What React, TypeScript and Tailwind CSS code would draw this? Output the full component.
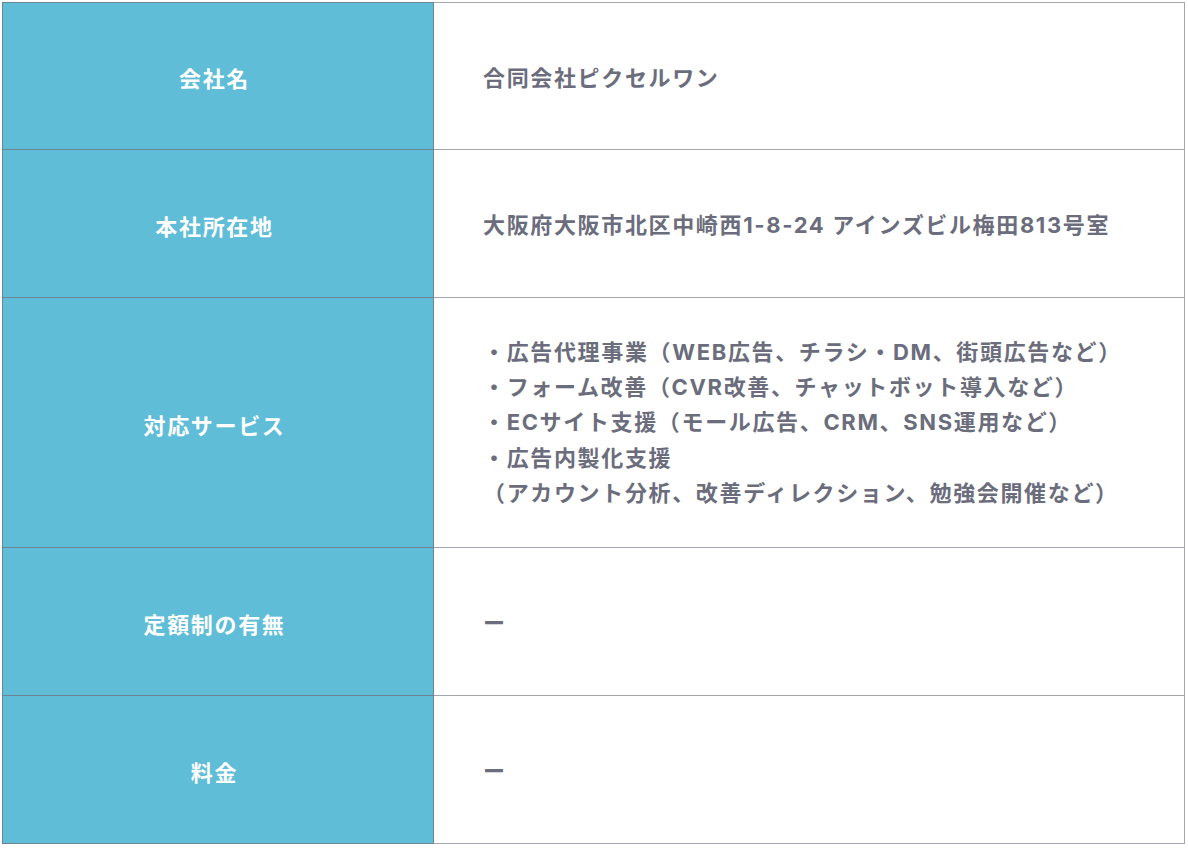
const rows: { label: string; value: React.ReactNode; h: string; pad: string }[] = [
  { label: "会社名", value: "合同会社ピクセルワン", h: "h-[147px]", pad: "pt-[5px]" },
  { label: "本社所在地", value: "大阪府大阪市北区中崎西1-8-24 アインズビル梅田813号室", h: "h-[148px]", pad: "pt-[5px]" },
  {
    label: "対応サービス",
    value: (
      <>
        ・広告代理事業（WEB広告、チラシ・DM、街頭広告など）
        <br />
        ・フォーム改善（CVR改善、チャットボット導入など）
        <br />
        ・ECサイト支援（モール広告、CRM、SNS運用など）
        <br />
        ・広告内製化支援
        <br />
        （アカウント分析、改善ディレクション、勉強会開催など）
      </>
    ),
    h: "h-[250px]",
    pad: "pt-[1px]",
  },
  { label: "定額制の有無", value: "ー", h: "h-[148px]", pad: "pt-[5px]" },
  { label: "料金", value: "ー", h: "h-[148px]", pad: "pt-[5px]" },
];

export default function App() {
  return (
    <div className="bg-white p-[2px] pr-[3px] font-['Inter','Noto_Sans_CJK_JP',sans-serif]">
      <table className="w-full border-collapse border border-[#7b7e8b]">
        <tbody>
          {rows.map((r) => (
            <tr key={r.label} className={r.h}>
              <th className="w-[431px] border border-[#6c8595] bg-[#60bdd7] pr-[7px] pt-[7px] text-center text-[22px] font-bold tracking-[0.075em] text-white">
                {r.label}
              </th>
              <td
                className={`border border-[#a4a7b0] pl-[49px] text-left text-[22px] font-bold leading-[35.3px] tracking-[0.075em] text-[#6b6d7c] ${r.pad}`}
              >
                {r.value}
              </td>
            </tr>
          ))}
        </tbody>
      </table>
    </div>
  );
}
